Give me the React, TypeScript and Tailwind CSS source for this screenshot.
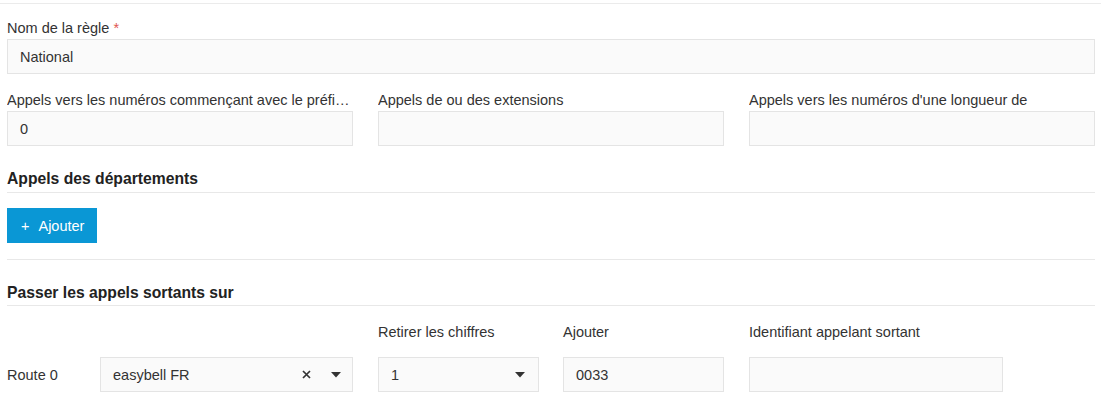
import React from "react";

function Caret() {
  return (
    <svg width="10" height="6" viewBox="0 0 10 6" className="block">
      <path d="M0 0 L10 0 L5 5.5 Z" fill="#333" />
    </svg>
  );
}

function Cross() {
  return (
    <svg width="9" height="9" viewBox="0 0 9 9" className="block">
      <path d="M1 1 L8 8 M8 1 L1 8" stroke="#333" strokeWidth="1.7" />
    </svg>
  );
}

const inputCls =
  "h-[35px] border border-[#e4e4e4] bg-[#fafafa] flex items-center pl-[12px] text-[#333]";

export default function App() {
  return (
    <div className="w-[1101px] h-[400px] overflow-hidden bg-white text-[14.5px] leading-[20px] text-[#333] font-['Liberation_Sans',Arial,sans-serif]">
      <div className="h-[3px]" />
      <div className="border-t border-[#ebebeb]" />
      <div className="pl-[7px] w-[1095px]">
        {/* Nom */}
        <div className="mt-[14px]">
          <div className="h-[20px] mb-[1px]">
            Nom de la règle <span className="text-[#e0584f]">*</span>
          </div>
          <div className={inputCls}>National</div>
        </div>

        {/* Row 2 */}
        <div className="mt-[16px] grid grid-cols-3 gap-x-[25px]">
          <div className="min-w-0">
            <div className="h-[20px] mb-[1px] pr-[3px] truncate">
              Appels vers les numéros commençant avec le préfixe
            </div>
            <div className={inputCls}>0</div>
          </div>
          <div className="min-w-0">
            <div className="h-[20px] mb-[1px] pr-[3px] truncate">Appels de ou des extensions</div>
            <div className={inputCls}></div>
          </div>
          <div className="min-w-0">
            <div className="h-[20px] mb-[1px] pr-[3px] truncate">
              Appels vers les numéros d'une longueur de
            </div>
            <div className={inputCls}></div>
          </div>
        </div>

        {/* Appels des départements */}
        <div className="mt-[22px] pb-[2px] border-b border-[#e8e8e8]">
          <div className="text-[15.7px] leading-[22px] font-bold text-[#222]">
            Appels des départements
          </div>
        </div>
        <div className="mt-[15px]">
          <button className="h-[35px] w-[90px] bg-[#0a97d5] text-white flex items-center pl-[14px]">
            <span className="mr-[9px]">+</span>
            <span>Ajouter</span>
          </button>
        </div>
        <div className="mt-[16px] border-t border-[#e8e8e8]" />

        {/* Passer les appels */}
        <div className="mt-[22px] pb-[1px] border-b border-[#e8e8e8]">
          <div className="text-[15.7px] leading-[22px] font-bold text-[#222]">
            Passer les appels sortants sur
          </div>
        </div>

        <div className="mt-[16px] flex">
          <div className="w-[371px]" />
          <div className="w-[185px] h-[20px]">Retirer les chiffres</div>
          <div className="w-[186px] h-[20px]">Ajouter</div>
          <div className="h-[20px]">Identifiant appelant sortant</div>
        </div>
        <div className="mt-[15px] flex items-center">
          <div className="w-[93px]">Route 0</div>
          <div className={inputCls + " w-[253px] pr-[11px]"}>
            <span className="flex-1">easybell FR</span>
            <span className="mr-[20px]">
              <Cross />
            </span>
            <Caret />
          </div>
          <div className="w-[25px]" />
          <div className={inputCls + " w-[161px] pr-[13px]"}>
            <span className="flex-1">1</span>
            <Caret />
          </div>
          <div className="w-[24px]" />
          <div className={inputCls + " w-[161px]"}>0033</div>
          <div className="w-[25px]" />
          <div className={inputCls + " w-[254px]"}></div>
        </div>
      </div>
    </div>
  );
}
